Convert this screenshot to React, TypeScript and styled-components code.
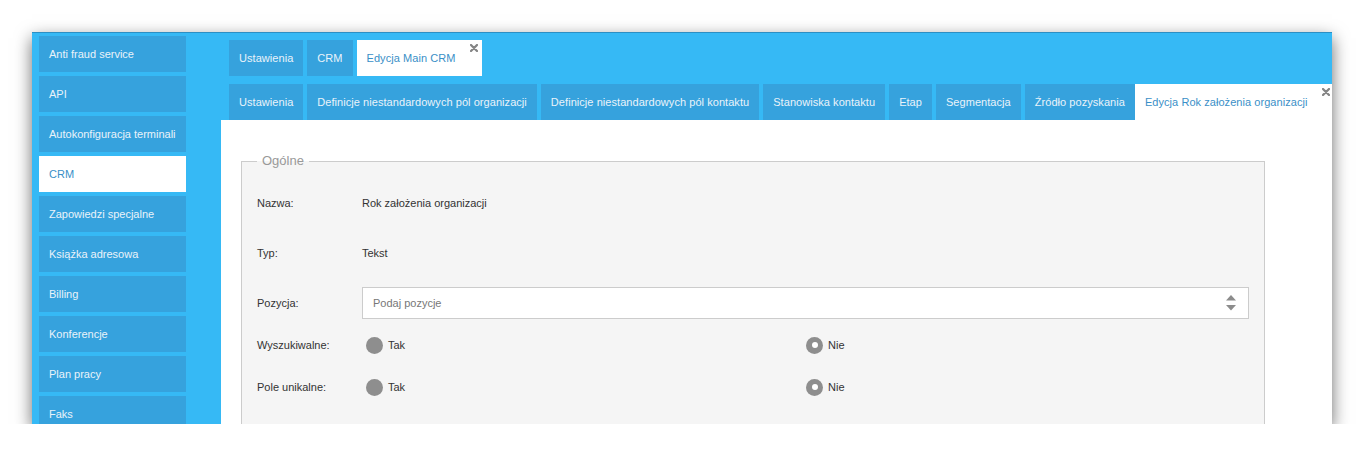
import React from "react";
import styled, { createGlobalStyle } from "styled-components";

const GlobalStyle = createGlobalStyle`
    html, body {
        margin: 0;
        padding: 0;
        background: #ffffff;
    }
    body {
        font-family: "Liberation Sans", Arial, sans-serif;
        font-size: 11px;
    }
    * {
        box-sizing: border-box;
    }
`;

const sideItems = [
    "Anti fraud service",
    "API",
    "Autokonfiguracja terminali",
    "CRM",
    "Zapowiedzi specjalne",
    "Książka adresowa",
    "Billing",
    "Konferencje",
    "Plan pracy",
    "Faks",
];

const topTabs = ["Ustawienia", "CRM"];

const subTabs = [
    "Ustawienia",
    "Definicje niestandardowych pól organizacji",
    "Definicje niestandardowych pól kontaktu",
    "Stanowiska kontaktu",
    "Etap",
    "Segmentacja",
    "Źródło pozyskania",
];

const CloseIcon: React.FC = () => (
    <CloseMark width="8" height="8" viewBox="0 0 8 8">
        <path d="M1 1 L7 7 M7 1 L1 7" stroke="#858585" strokeWidth="2.3" strokeLinecap="round" />
    </CloseMark>
);

const Spinner: React.FC = () => (
    <svg width="10" height="16" viewBox="0 0 10 16">
        <polygon points="0,5.5 5,0 10,5.5" fill="#8c8c8c" />
        <polygon points="0,10 10,10 5,15.5" fill="#8c8c8c" />
    </svg>
);

const Radio: React.FC<{ label: string; checked?: boolean }> = ({ label, checked }) => (
    <RadioOption>
        <RadioDot $checked={!!checked} />
        <span>{label}</span>
    </RadioOption>
);

export default function App() {
    return (
        <>
            <GlobalStyle />
            <Window>
                <Sidebar>
                    {sideItems.map(item => (
                        <SideItem key={item} $active={item === "CRM"}>
                            {item}
                        </SideItem>
                    ))}
                </Sidebar>
                <Main>
                    <TabBar>
                        <TabRow>
                            {topTabs.map(t => (
                                <Tab key={t}>{t}</Tab>
                            ))}
                            <Tab $active>
                                Edycja Main CRM
                                <CloseIcon />
                            </Tab>
                        </TabRow>
                        <TabRow>
                            {subTabs.map(t => (
                                <Tab key={t}>{t}</Tab>
                            ))}
                            <Tab $active $flush>
                                Edycja Rok założenia organizacji
                                <CloseIcon />
                            </Tab>
                        </TabRow>
                    </TabBar>
                    <Content>
                        <Fieldset>
                            <Legend>Ogólne</Legend>
                            <FormRow $spacing={18}>
                                <Label>Nazwa:</Label>
                                <Value>Rok założenia organizacji</Value>
                            </FormRow>
                            <FormRow $spacing={18}>
                                <Label>Typ:</Label>
                                <Value>Tekst</Value>
                            </FormRow>
                            <FormRow $spacing={10}>
                                <Label>Pozycja:</Label>
                                <InputBox>
                                    <Input placeholder="Podaj pozycje" />
                                    <Spinner />
                                </InputBox>
                            </FormRow>
                            <FormRow $spacing={10}>
                                <Label>Wyszukiwalne:</Label>
                                <RadioGroup>
                                    <Radio label="Tak" />
                                    <Radio label="Nie" checked />
                                </RadioGroup>
                            </FormRow>
                            <FormRow $spacing={10}>
                                <Label>Pole unikalne:</Label>
                                <RadioGroup>
                                    <Radio label="Tak" />
                                    <Radio label="Nie" checked />
                                </RadioGroup>
                            </FormRow>
                        </Fieldset>
                    </Content>
                </Main>
            </Window>
        </>
    );
}

const Window = styled.div`
    margin: 32px 0 0 32px;
    width: 1300px;
    height: 392px;
    display: flex;
    overflow: hidden;
    background: #36b9f5;
    box-shadow: inset 0 1px 0 #2c8fc4, 0 6px 16px rgba(0, 0, 0, 0.58);
`;

const Sidebar = styled.nav`
    width: 189px;
    flex-shrink: 0;
    padding: 4px 0 0 7px;
    display: flex;
    flex-direction: column;
    gap: 4px;
    overflow: hidden;
`;

const SideItem = styled.div<{ $active?: boolean }>`
    width: 147px;
    height: 36px;
    flex-shrink: 0;
    display: flex;
    align-items: center;
    padding-left: 10px;
    background: ${p => (p.$active ? "#ffffff" : "#36a2dd")};
    color: ${p => (p.$active ? "#3a8fc7" : "#eaf3fa")};
    font-size: 11px;
    white-space: nowrap;
`;

const Main = styled.div`
    flex: 1;
    min-width: 0;
    display: flex;
    flex-direction: column;
`;

const TabBar = styled.div`
    padding: 8px 0 0 8px;
    display: flex;
    flex-direction: column;
    gap: 8px;
`;

const TabRow = styled.div`
    display: flex;
    gap: 4px;
`;

const Tab = styled.div<{ $active?: boolean; $flush?: boolean }>`
    position: relative;
    flex-shrink: 0;
    height: 36px;
    display: flex;
    align-items: center;
    padding: 0 ${p => (p.$active ? "27px" : "10px")} 0 10px;
    margin-left: ${p => (p.$flush ? "-4px" : "0")};
    background: ${p => (p.$active ? "#ffffff" : "#36a2dd")};
    color: ${p => (p.$active ? "#3a8fc7" : "#eaf3fa")};
    font-size: 11px;
    letter-spacing: 0.053px;
    white-space: nowrap;
`;

const CloseMark = styled.svg`
    position: absolute;
    top: 4px;
    right: 4px;
`;

const Content = styled.div`
    flex: 1;
    background: #ffffff;
    padding: 33px 0 0 20px;
    overflow: hidden;
`;

const Fieldset = styled.fieldset`
    width: 1024px;
    margin: 0;
    padding: 18px 15px 20px;
    border: 1px solid #cccccc;
    background: #f5f5f5;
`;

const Legend = styled.legend`
    padding: 0 5px;
    font-size: 13px;
    line-height: 16px;
    color: #999999;
`;

const FormRow = styled.div<{ $spacing: number }>`
    display: flex;
    align-items: center;
    height: 32px;
    margin-bottom: ${p => p.$spacing}px;
    color: #333333;
`;

const Label = styled.div`
    width: 105px;
    flex-shrink: 0;
`;

const Value = styled.div`
    flex: 1;
`;

const InputBox = styled.div`
    flex: 1;
    height: 32px;
    display: flex;
    align-items: center;
    padding: 0 12px 0 10px;
    background: #ffffff;
    border: 1px solid #cccccc;
`;

const Input = styled.input`
    flex: 1;
    border: none;
    outline: none;
    padding: 0;
    background: transparent;
    font-family: "Liberation Sans", Arial, sans-serif;
    font-size: 11px;
    color: #333333;

    &::placeholder {
        color: #777777;
    }
`;

const RadioGroup = styled.div`
    flex: 1;
    display: grid;
    grid-template-columns: 440px 1fr;
    padding-left: 4px;
`;

const RadioOption = styled.label`
    display: flex;
    align-items: center;
    gap: 5px;
`;

const RadioDot = styled.span<{ $checked: boolean }>`
    width: 17px;
    height: 17px;
    border-radius: 50%;
    background: #8e8e8e;
    display: flex;
    align-items: center;
    justify-content: center;

    &::after {
        content: "";
        display: ${p => (p.$checked ? "block" : "none")};
        width: 6px;
        height: 6px;
        border-radius: 50%;
        background: #ffffff;
    }
`;
